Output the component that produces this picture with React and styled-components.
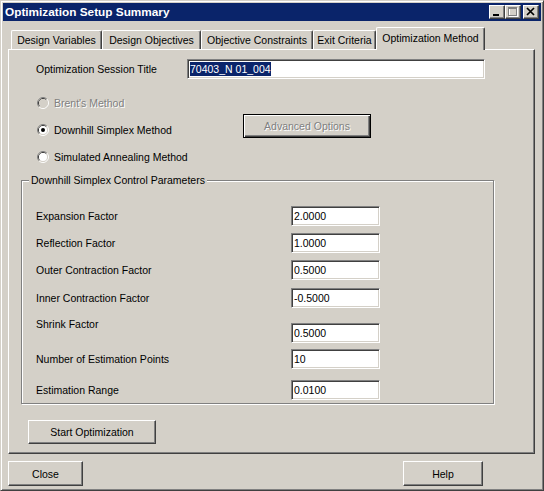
import React from "react";
import styled, { createGlobalStyle } from "styled-components";

const GlobalStyle = createGlobalStyle`
  html, body {
    margin: 0;
    padding: 0;
    background: #d4d0c8;
  }

  body {
    font-family: "Liberation Sans", Arial, sans-serif;
    font-size: 10.5px;
    color: #000;
  }
`;

const tabs = [
  { label: "Design Variables", width: 91 },
  { label: "Design Objectives", width: 99 },
  { label: "Objective Constraints", width: 112 },
  { label: "Exit Criteria", width: 63 },
  { label: "Optimization Method", width: 109, active: true },
];

const params = [
  { label: "Expansion Factor", value: "2.0000", gap: 25 },
  { label: "Reflection Factor", value: "1.0000", gap: 7 },
  { label: "Outer Contraction Factor", value: "0.5000", gap: 7 },
  { label: "Inner Contraction Factor", value: "-0.5000", gap: 8 },
  { label: "Shrink Factor", value: "0.5000", gap: 15, labelUp: true },
  { label: "Number of Estimation Points", value: "10", gap: 6 },
  { label: "Estimation Range", value: "0.0100", gap: 11 },
];

const Radio = ({ checked, disabled }) => (
  <RadioIcon viewBox="0 0 12 12">
    <path d="M2.11 9.89 A5.5 5.5 0 0 1 9.89 2.11" stroke="#808080" fill="none" />
    <path d="M9.89 2.11 A5.5 5.5 0 0 1 2.11 9.89" stroke="#ffffff" fill="none" />
    <path d="M2.82 9.18 A4.5 4.5 0 0 1 9.18 2.82" stroke="#404040" fill="none" />
    <path d="M9.18 2.82 A4.5 4.5 0 0 1 2.82 9.18" stroke="#d4d0c8" fill="none" />
    <circle cx="6" cy="6" r="4" fill={disabled ? "#d4d0c8" : "#ffffff"} />
    {checked && <circle cx="6" cy="6" r="2" fill="#000" />}
  </RadioIcon>
);

export default function App() {
  return (
    <>
      <GlobalStyle />
      <Window>
        <TitleBar>
          <TitleText>Optimization Setup Summary</TitleText>
          <Controls>
            <CtrlButton>
              <svg width="14" height="12" viewBox="0 0 14 12">
                <rect x="3" y="8" width="6" height="2" fill="#000" />
              </svg>
            </CtrlButton>
            <CtrlButton>
              <svg width="14" height="12" viewBox="0 0 14 12">
                <rect x="3.5" y="2.5" width="8" height="8" stroke="#fff" fill="none" />
                <rect x="2.5" y="1.5" width="8" height="8" stroke="#808080" fill="none" />
                <line x1="2" y1="2.5" x2="11" y2="2.5" stroke="#808080" />
              </svg>
            </CtrlButton>
            <CtrlButton $gap>
              <svg width="14" height="12" viewBox="0 0 14 12">
                <path d="M3 2 L10 9 M10 2 L3 9" stroke="#000" strokeWidth="1.7" />
              </svg>
            </CtrlButton>
          </Controls>
        </TitleBar>

        <Body>
          <TabRow>
            {tabs.map((t) => (
              <Tab key={t.label} $w={t.width} $active={t.active}>
                {t.label}
              </Tab>
            ))}
          </TabRow>

          <Panel>
            <SessionRow>
              <SessionLabel>Optimization Session Title</SessionLabel>
              <Field $w={298}>
                <Selected>70403_N 01_004</Selected>
              </Field>
            </SessionRow>

            <RadioGrid>
              <RadioRow $row={1} $disabled>
                <Radio disabled />
                Brent's Method
              </RadioRow>
              <RadioRow $row={2}>
                <Radio checked />
                Downhill Simplex Method
              </RadioRow>
              <RadioRow $row={3}>
                <Radio />
                Simulated Annealing Method
              </RadioRow>
              <AdvancedButton $default $disabled>
                Advanced Options
              </AdvancedButton>
            </RadioGrid>

            <GroupBox>
              <Legend>Downhill Simplex Control Parameters</Legend>
              {params.map((p) => (
                <ParamRow key={p.label} $gap={p.gap}>
                  <ParamLabel $up={p.labelUp}>{p.label}</ParamLabel>
                  <Field $w={89}>{p.value}</Field>
                </ParamRow>
              ))}
            </GroupBox>

            <StartButton>Start Optimization</StartButton>
          </Panel>

          <Footer>
            <Button $w={75}>Close</Button>
            <Button $w={80}>Help</Button>
          </Footer>
        </Body>
      </Window>
    </>
  );
}

const Window = styled.div`
  box-sizing: border-box;
  display: flex;
  flex-direction: column;
  width: 544px;
  height: 491px;
  padding: 2px;

  background: #d4d0c8;
  border: 1px solid;
  border-color: #d4d0c8 #404040 #404040 #d4d0c8;
  box-shadow: inset 1px 1px #fff, inset -1px -1px #808080;
`;

const TitleBar = styled.div`
  display: flex;
  align-items: center;
  flex-shrink: 0;
  height: 18px;
  padding-left: 2px;

  background: #0a246a;
`;

const TitleText = styled.span`
  font-size: 11.8px;
  font-weight: 700;
  color: #fff;
`;

const Controls = styled.div`
  display: flex;
  margin-left: auto;
  padding-right: 2px;
`;

const CtrlButton = styled.div`
  box-sizing: border-box;
  display: flex;
  align-items: center;
  justify-content: center;
  width: 16px;
  height: 14px;
  margin-left: ${(p) => (p.$gap ? 2 : 0)}px;

  background: #d4d0c8;
  border: 1px solid;
  border-color: #fff #404040 #404040 #fff;
  box-shadow: inset -1px -1px #808080;
`;

const Body = styled.div`
  display: flex;
  flex-direction: column;
  flex: 1;
  padding: 6px 6px 2px 5px;
`;

const TabRow = styled.div`
  display: flex;
  align-items: flex-end;
  height: 22px;
  padding-left: 3px;
`;

const Tab = styled.div`
  box-sizing: border-box;
  position: relative;
  z-index: ${(p) => (p.$active ? 2 : 1)};
  display: flex;
  align-items: center;
  justify-content: center;
  width: ${(p) => p.$w}px;
  height: ${(p) => (p.$active ? 23 : 19)}px;
  margin-bottom: ${(p) => (p.$active ? -1 : 0)}px;
  padding-bottom: ${(p) => (p.$active ? 2 : 0)}px;

  background: #d4d0c8;
  border-top: 1px solid #fff;
  border-left: 1px solid #fff;
  border-right: 1px solid #404040;
  border-radius: 2px 2px 0 0;
  box-shadow: inset -1px 0 #808080;
  white-space: nowrap;
`;

const Panel = styled.div`
  box-sizing: border-box;
  display: flex;
  flex-direction: column;
  align-items: flex-start;
  height: 405px;

  border: 1px solid;
  border-color: #fff #404040 #404040 #fff;
  box-shadow: inset -1px -1px #808080;
`;

const SessionRow = styled.div`
  display: flex;
  align-items: center;
  margin: 9px 0 0 27px;
`;

const SessionLabel = styled.span`
  width: 151px;
`;

const Field = styled.div`
  box-sizing: border-box;
  display: flex;
  align-items: center;
  width: ${(p) => p.$w}px;
  height: 20px;
  padding-left: 2px;

  background: #fff;
  border: 1px solid;
  border-color: #808080 #fff #fff #808080;
  box-shadow: inset 1px 1px #404040, inset -1px -1px #d4d0c8;
`;

const Selected = styled.span`
  padding: 1px 0;
  line-height: 12px;
  background: #0a246a;
  color: #fff;
`;

const RadioGrid = styled.div`
  display: grid;
  grid-template-columns: 206px 128px;
  grid-auto-rows: 27px;
  margin: 10px 0 0 28px;
`;

const RadioRow = styled.label`
  display: flex;
  align-items: center;
  gap: 5px;
  grid-column: 1;
  grid-row: ${(p) => p.$row};

  color: ${(p) => (p.$disabled ? "#808080" : "#000")};
  text-shadow: ${(p) => (p.$disabled ? "1px 1px #fff" : "none")};
`;

const RadioIcon = styled.svg`
  width: 12px;
  height: 12px;
  flex-shrink: 0;
`;

const Button = styled.div`
  box-sizing: border-box;
  display: flex;
  align-items: center;
  justify-content: center;
  width: ${(p) => p.$w || 128}px;
  height: ${(p) => p.$h || 25}px;

  background: #d4d0c8;
  border: 1px solid;
  border-color: ${(p) => (p.$default ? "#000" : "#fff #404040 #404040 #fff")};
  box-shadow: ${(p) =>
    p.$default
      ? "inset 1px 1px #fff, inset -1px -1px #404040, inset -2px -2px #808080"
      : "inset -1px -1px #808080"};
  color: ${(p) => (p.$disabled ? "#808080" : "#000")};
  text-shadow: ${(p) => (p.$disabled ? "1px 1px #fff" : "none")};
`;

const AdvancedButton = styled(Button)`
  grid-column: 2;
  grid-row: 2;
  align-self: start;
  height: 24px;
  margin-top: -2px;
`;

const GroupBox = styled.div`
  box-sizing: border-box;
  position: relative;
  display: flex;
  flex-direction: column;
  width: 473px;
  height: 224px;
  margin: 10px 0 0 12px;
  padding-left: 14px;

  border: 1px solid #808080;
  box-shadow: inset 1px 1px #fff, 1px 1px #fff;
`;

const Legend = styled.span`
  position: absolute;
  top: -7px;
  left: 7px;
  padding: 0 2px;
  line-height: 13px;
  background: #d4d0c8;
`;

const ParamRow = styled.div`
  display: flex;
  align-items: center;
  height: 20px;
  margin-top: ${(p) => p.$gap}px;
`;

const ParamLabel = styled.span`
  width: 255px;
  line-height: 13px;
  align-self: ${(p) => (p.$up ? "flex-start" : "center")};
  margin-top: ${(p) => (p.$up ? -5 : 0)}px;
`;

const StartButton = styled(Button)`
  height: 24px;
  margin: 16px 0 0 19px;
`;

const Footer = styled.div`
  display: flex;
  justify-content: space-between;
  margin-top: 7px;
  padding-right: 52px;
`;
